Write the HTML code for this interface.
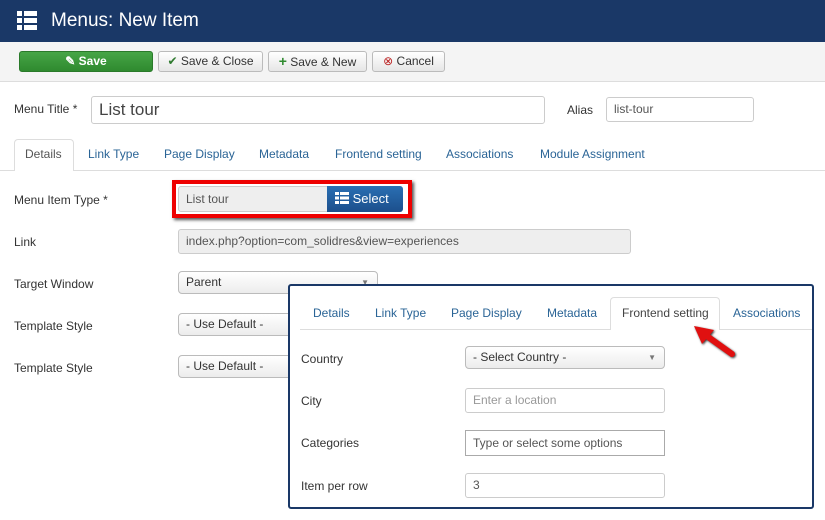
<!DOCTYPE html>
<html><head><style>
*{box-sizing:border-box;margin:0;padding:0}
body{width:825px;height:520px;background:#fff;font-family:"Liberation Sans",sans-serif;font-size:12px;color:#333;position:relative;overflow:hidden}
.a{position:absolute}
.hdr{left:0;top:0;width:825px;height:42px;background:#1a3867}
.tb{left:0;top:42px;width:825px;height:40px;background:#f4f4f4;border-bottom:1px solid #ddd}
.btn{position:absolute;top:51px;height:21px;border:1px solid #bbb;border-radius:3px;background:linear-gradient(#fff,#e6e6e6);font-size:12px;line-height:19px;text-align:center;color:#333}
.lbl{position:absolute;font-size:12px;color:#333}
.inp{position:absolute;border:1px solid #ccc;border-radius:3px;background:#fff;padding-left:7px;font-size:12px;color:#555}
.sel{position:absolute;border:1px solid #bbb;border-radius:4px;background:linear-gradient(#fff,#ececec);padding-left:7px;font-size:12px;color:#333}
.tab{position:absolute;font-size:12px;color:#2a6496}
</style></head><body>
<div class="a hdr"></div>
<svg class="a" style="left:17px;top:11px" width="20" height="19"><g fill="#fff"><rect x="0" y="0" width="5" height="5"/><rect x="7" y="0" width="13" height="5"/><rect x="0" y="7" width="5" height="5"/><rect x="7" y="7" width="13" height="5"/><rect x="0" y="14" width="5" height="5"/><rect x="7" y="14" width="13" height="5"/></g></svg>
<div class="a" style="left:51px;top:10px;font-size:19px;color:#fff">Menus: New Item</div>
<div class="a tb"></div>
<div class="btn" style="left:19px;width:134px;background:linear-gradient(#46a546,#2f8a2f);border-color:#2a7a2a;color:#fff;font-weight:bold">&#9998; Save</div>
<div class="btn" style="left:158px;width:105px"><span style="color:#2f7a2f">✔</span> Save &amp; Close</div>
<div class="btn" style="left:268px;width:99px"><span style="color:#2f8a2f;font-weight:bold;font-size:14px">+</span> Save &amp; New</div>
<div class="btn" style="left:372px;width:73px"><span style="color:#b22;">⊗</span> Cancel</div>

<div class="lbl" style="left:14px;top:102px">Menu Title *</div>
<div class="inp" style="left:91px;top:96px;width:454px;height:28px;font-size:17px;line-height:26px;color:#444">List tour</div>
<div class="lbl" style="left:567px;top:103px">Alias</div>
<div class="inp" style="left:606px;top:97px;width:148px;height:25px;line-height:23px">list-tour</div>

<div class="a" style="left:0;top:170px;width:825px;height:1px;background:#ddd"></div>
<div class="a" style="left:14px;top:139px;width:60px;height:32px;background:#fff;border:1px solid #ddd;border-bottom:none;border-radius:4px 4px 0 0"></div>
<div class="tab" style="left:25px;top:147px;color:#555">Details</div>
<div class="tab" style="left:88px;top:147px">Link Type</div>
<div class="tab" style="left:164px;top:147px">Page Display</div>
<div class="tab" style="left:259px;top:147px">Metadata</div>
<div class="tab" style="left:335px;top:147px">Frontend setting</div>
<div class="tab" style="left:446px;top:147px">Associations</div>
<div class="tab" style="left:540px;top:147px">Module Assignment</div>

<div class="lbl" style="left:14px;top:193px">Menu Item Type *</div>
<div class="a" style="left:172px;top:180px;width:240px;height:38px;border:4px solid #e00;box-shadow:2px 2px 3px #555"></div>
<div class="inp" style="left:178px;top:186px;width:150px;height:26px;line-height:24px;background:#eee;border-radius:3px 0 0 3px">List tour</div>
<div class="a" style="left:327px;top:186px;width:76px;height:26px;background:linear-gradient(#2a6fb3,#1c4f8c);border-radius:0 3px 3px 0;color:#fff;font-size:13px;line-height:26px;padding-left:8px"><svg width="14" height="12" style="vertical-align:-1px"><g fill="#fff"><rect x="0" y="0" width="4" height="3"/><rect x="5" y="0" width="9" height="3"/><rect x="0" y="4.5" width="4" height="3"/><rect x="5" y="4.5" width="9" height="3"/><rect x="0" y="9" width="4" height="3"/><rect x="5" y="9" width="9" height="3"/></g></svg> Select</div>

<div class="lbl" style="left:14px;top:235px">Link</div>
<div class="inp" style="left:178px;top:229px;width:453px;height:25px;line-height:23px;background:#eee">index.php?option=com_solidres&amp;view=experiences</div>

<div class="lbl" style="left:14px;top:277px">Target Window</div>
<div class="sel" style="left:178px;top:271px;width:200px;height:23px;line-height:21px">Parent<span style="position:absolute;right:8px;color:#777;font-size:8px">▼</span></div>
<div class="lbl" style="left:14px;top:319px">Template Style</div>
<div class="sel" style="left:178px;top:313px;width:200px;height:23px;line-height:21px">- Use Default -</div>
<div class="lbl" style="left:14px;top:361px">Template Style</div>
<div class="sel" style="left:178px;top:355px;width:200px;height:23px;line-height:21px">- Use Default -</div>

<div class="a" style="left:288px;top:284px;width:526px;height:225px;background:#fff;border:2px solid #1a3867;border-radius:3px"></div>
<div class="a" style="left:300px;top:329px;width:512px;height:1px;background:#ddd"></div>
<div class="a" style="left:610px;top:297px;width:110px;height:33px;background:#fff;border:1px solid #ddd;border-bottom:none;border-radius:4px 4px 0 0"></div>
<div class="tab" style="left:313px;top:306px">Details</div>
<div class="tab" style="left:375px;top:306px">Link Type</div>
<div class="tab" style="left:451px;top:306px">Page Display</div>
<div class="tab" style="left:547px;top:306px">Metadata</div>
<div class="tab" style="left:622px;top:306px;color:#444">Frontend setting</div>
<div class="tab" style="left:733px;top:306px">Associations</div>

<div class="lbl" style="left:301px;top:352px">Country</div>
<div class="sel" style="left:465px;top:346px;width:200px;height:23px;line-height:21px">- Select Country -<span style="position:absolute;right:8px;color:#777;font-size:8px">▼</span></div>
<div class="lbl" style="left:301px;top:394px">City</div>
<div class="inp" style="left:465px;top:388px;width:200px;height:25px;line-height:23px;color:#999">Enter a location</div>
<div class="lbl" style="left:301px;top:436px">Categories</div>
<div class="inp" style="left:465px;top:430px;width:200px;height:26px;line-height:24px;border-color:#aaa;border-radius:0;color:#555">Type or select some options</div>
<div class="lbl" style="left:301px;top:479px">Item per row</div>
<div class="inp" style="left:465px;top:473px;width:200px;height:25px;line-height:23px">3</div>

<svg class="a" style="left:690px;top:322px" width="50" height="40"><g style="filter:drop-shadow(1px 1px 1px #333)"><line x1="42" y1="32" x2="14" y2="12" stroke="#e01010" stroke-width="6" stroke-linecap="round"/><polygon points="4,4 24,8 12,22" fill="#e01010"/></g></svg>
</body></html>
